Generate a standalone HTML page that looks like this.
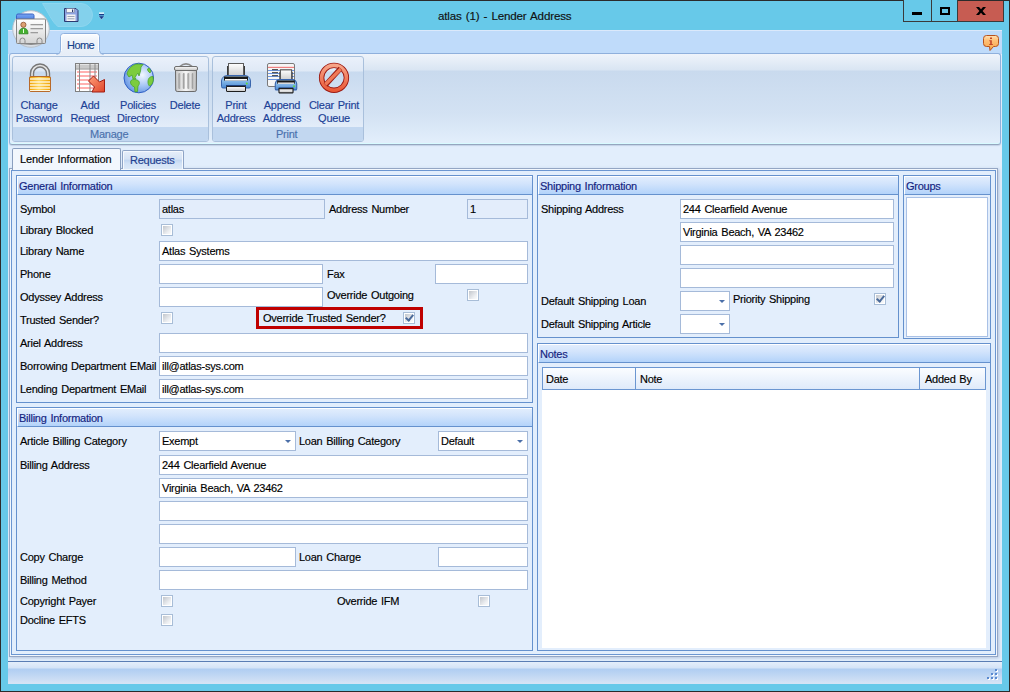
<!DOCTYPE html>
<html><head><meta charset="utf-8">
<style>
*{box-sizing:border-box}
html,body{margin:0;padding:0}
body{width:1010px;height:692px;position:relative;overflow:hidden;background:#67c9e9;font-family:"Liberation Sans",sans-serif;font-size:11px;color:#000;letter-spacing:-0.25px;word-spacing:1px;-webkit-text-stroke:0.15px currentColor}
.a{position:absolute}
.t{position:absolute;white-space:nowrap;line-height:13px}
.grp{position:absolute;border:1px solid #6591cd;background:#e3eefc}
.gh{position:absolute;left:0;top:0;right:0;height:19px;border-top:1px solid #fff;border-left:1px solid #fff;border-bottom:1px solid #6591cd;background:linear-gradient(#e1edfd,#d2e4fc 40%,#b3d3fa);color:#13237f}
.gh span{position:absolute;left:1px;top:3px;line-height:13px}
.tb{position:absolute;height:20px;border:1px solid #a5bad9;background:#fff}
.tb span{position:absolute;left:2px;top:3px;line-height:13px;white-space:nowrap}
.dis{background:#e3edfb}
.cb{position:absolute;width:12px;height:12px;border:1px solid #a8bdd7;background:#fff}
.cb:after{content:"";position:absolute;left:1px;top:1px;width:8px;height:8px;background:linear-gradient(135deg,#c2c6cc,#eef0f3 70%,#fafbfc)}
.chk:before{content:"";position:absolute;z-index:2;left:2px;top:0px;width:3px;height:6px;border-right:2px solid #4a6a9a;border-bottom:2px solid #4a6a9a;transform:rotate(40deg);left:3px}
.cmb:after{content:"";position:absolute;right:4px;top:8px;border-left:3px solid transparent;border-right:3px solid transparent;border-top:3px solid #4b6fa8}
.rb{position:absolute;color:#1c4196;text-align:center;line-height:13px;white-space:nowrap}
</style></head>
<body>
<!-- window frame -->
<div class="a" style="left:0;top:0;width:1010px;height:692px;border:1px solid #2b2b2b"></div>

<!-- title -->
<div class="t" style="left:438px;top:9px;font-size:11.6px;color:#111;letter-spacing:-0.15px">atlas (1) - Lender Address</div>

<!-- window buttons -->
<div class="a" style="left:903px;top:0;width:29px;height:22px;border:1px solid #3a3a3a;border-top:0;background:#67c9e9"></div>
<div class="a" style="left:912px;top:12px;width:10px;height:3px;background:#000"></div>
<div class="a" style="left:932px;top:0;width:26px;height:22px;border-right:1px solid #3a3a3a;border-bottom:1px solid #3a3a3a;background:#67c9e9"></div>
<div class="a" style="left:940px;top:7px;width:10px;height:8px;border:2px solid #000"></div>
<div class="a" style="left:957px;top:1px;width:47px;height:21px;background:#c75c52;border-left:1px solid #3a3a3a;border-right:1px solid #3a3a3a;border-bottom:1px solid #3a3a3a"></div>
<svg class="a" style="left:970px;top:2px" width="22" height="18" viewBox="0 0 22 18"><path d="M6 5 H9 L11 7.3 L13 5 H16 L12.6 9 L16 13 H13 L11 10.7 L9 13 H6 L9.4 9 Z" fill="#000"/></svg>

<!-- ribbon tab strip -->
<div class="a" style="left:8px;top:30px;width:994px;height:632px;background:#e2eefc"></div>
<div class="a" style="left:8px;top:30px;width:994px;height:24px;background:#bfdbfa;border-top:1px solid #dbe9fb"></div>
<!-- QAT background -->
<svg class="a" style="left:0;top:0" width="110" height="54" viewBox="0 0 110 54">
<defs>
<radialGradient id="apc" cx="0.5" cy="0.35" r="0.65"><stop offset="0" stop-color="#ffffff"/><stop offset="0.7" stop-color="#f3f5f8"/><stop offset="1" stop-color="#d2d8df"/></radialGradient>
<linearGradient id="crd" x1="0" x2="0" y1="0" y2="1"><stop offset="0" stop-color="#ffffff"/><stop offset="1" stop-color="#d4d4d4"/></linearGradient>
<linearGradient id="ctab" x1="0" x2="0" y1="0" y2="1"><stop offset="0" stop-color="#7aa6f0"/><stop offset="1" stop-color="#4f83e6"/></linearGradient>
</defs>
<path d="M42.5 3.5 H81 A11.5 11.5 0 0 1 81 26.5 H58 C52 22 48 12 42.5 3.5 Z" fill="#83d1ec" stroke="#8dd6ef" stroke-width="1"/>
<circle cx="31" cy="29" r="18.3" fill="url(#apc)" stroke="#b9c2cc" stroke-width="1"/>
<path d="M16.5 19 V15.5 Q16.5 14 18 14 H32.5 Q34 14 34 15.5 V19 Z" fill="url(#ctab)" stroke="#3b62c4" stroke-width="1"/>
<rect x="16.5" y="19" width="29" height="24.5" rx="1" fill="url(#crd)" stroke="#858585" stroke-width="1"/>
<circle cx="23.4" cy="24.8" r="2.6" fill="#dca174" stroke="#8d4f2c" stroke-width="0.8"/>
<path d="M19 33.8 Q19 28.2 23.5 28.2 Q28 28.2 28 33.8 Z" fill="#44b02f" stroke="#2b7f1d" stroke-width="0.8"/>
<rect x="23" y="29" width="1" height="4" fill="#e8ffe0"/>
<g fill="#9c9c9c"><rect x="30.5" y="24" width="12.5" height="1.3"/><rect x="30.5" y="28" width="12.5" height="1.3"/><rect x="30.5" y="32" width="7.5" height="1.3"/></g>
<path d="M20 43.5 V40.5 A2.5 2.5 0 0 1 25 40.5 V43.5 M37 43.5 V40.5 A2.5 2.5 0 0 1 42 40.5 V43.5 M20 43.5 Q31 45.5 42 43.5" fill="none" stroke="#8a8a8a" stroke-width="1"/>
<path d="M64.5 8.5 H76 L78 10.5 V21.5 H64.5 Z" fill="#8ea3e2" stroke="#2c3a70" stroke-width="1"/>
<rect x="66.5" y="8.5" width="8" height="4" fill="#f4f4f4" stroke="#5a6690" stroke-width="0.5"/>
<rect x="72" y="9.5" width="1.2" height="2.5" fill="#2c3a70"/>
<rect x="66.5" y="14.5" width="9" height="6.5" fill="#f4f4f4"/>
<g fill="#9aa3b8"><rect x="67.5" y="16" width="7" height="1"/><rect x="67.5" y="18.3" width="7" height="1"/></g>
<rect x="99" y="12.5" width="5" height="1.2" fill="#ffffff"/>
<rect x="99" y="14" width="5" height="1.3" fill="#1b3a8a"/>
<path d="M98.8 16.2 H104.2 L101.5 19.5 Z" fill="#1b3a8a"/>
<path d="M98.8 16.2 L101.5 19.5 L104.2 16.2" fill="none" stroke="#ffffff" stroke-width="0.5" opacity="0.6"/>
</svg>
<!-- Home tab -->

<!-- info icon -->
<svg class="a" style="left:980px;top:32px" width="22" height="20" viewBox="0 0 22 20">
<defs><linearGradient id="ifo" x1="0" x2="0" y1="0" y2="1"><stop offset="0" stop-color="#ffe3b8"/><stop offset="0.3" stop-color="#ffc27a"/><stop offset="1" stop-color="#f7a444"/></linearGradient></defs>
<path d="M6.5 3.5 H15.5 Q18.5 3.5 18.5 6.5 V11.5 Q18.5 14.5 15.5 14.5 H13.5 L10 18.5 L9.5 14.5 H6.5 Q3.5 14.5 3.5 11.5 V6.5 Q3.5 3.5 6.5 3.5 Z" fill="url(#ifo)" stroke="#b8521c" stroke-width="1"/>
<rect x="10" y="5.5" width="2" height="1.5" fill="#c4452a"/>
<path d="M9.3 8.3 H11.8 V12 H12.8 V13 H9.2 V12 H10.2 V9.3 H9.3 Z" fill="#c4452a"/>
</svg>
<!-- ribbon panel -->
<div class="a" style="left:9px;top:53px;width:992px;height:92px;border:1px solid #8fb0dc;border-bottom-color:#95a6bf;border-radius:3px;background:linear-gradient(#eff4fb 0px,#d9e5f3 16px,#c9daee 17px,#d3e2f3 60px,#e2eefb 88px);box-shadow:inset 0 -1px 0 #d8fbff, 0 1px 1px rgba(150,170,200,0.4)"></div>
<svg class="a" style="left:55px;top:30px" width="50" height="26" viewBox="0 0 50 26">
<defs><linearGradient id="hmt" x1="0" x2="0" y1="0" y2="1"><stop offset="0" stop-color="#fbfdff"/><stop offset="0.35" stop-color="#eef3fa"/><stop offset="1" stop-color="#e6edf7"/></linearGradient></defs>
<path d="M1.5 24.5 Q5.5 24 5.5 20.5 V6.5 Q5.5 3.5 8.5 3.5 H41.5 Q44.5 3.5 44.5 6.5 V20.5 Q44.5 24 48.5 24.5 V25.5 H1.5 Z" fill="url(#hmt)"/>
<path d="M1.5 24.5 Q5.5 24 5.5 20.5 V6.5 Q5.5 3.5 8.5 3.5 H41.5 Q44.5 3.5 44.5 6.5 V20.5 Q44.5 24 48.5 24.5" fill="none" stroke="#8fb1de" stroke-width="1"/>
<path d="M6.5 21 V7 Q6.5 4.5 9 4.5 H41 Q43.5 4.5 43.5 7 V21" fill="none" stroke="#ffffff" stroke-width="1" opacity="0.8"/>
</svg>
<div class="t" style="left:67px;top:39px;color:#15428b;letter-spacing:-0.55px">Home</div>
<!-- Manage group -->
<div class="a" style="left:12px;top:56px;width:197px;height:86px;border:1px solid #a9c0dc;border-radius:3px;background:linear-gradient(#eaf1fb 0px,#dfe9f6 14px,#c8daef 15px,#dce8f7 60px,#e3edf9 70px)"></div>
<div class="a" style="left:13px;top:127px;width:195px;height:14px;background:#c2d7f0;border-radius:0 0 2px 2px"></div>
<div class="t" style="left:90px;top:128px;color:#4a71ad">Manage</div>
<!-- Print group -->
<div class="a" style="left:212px;top:56px;width:152px;height:86px;border:1px solid #a9c0dc;border-radius:3px;background:linear-gradient(#eaf1fb 0px,#dfe9f6 14px,#c8daef 15px,#dce8f7 60px,#e3edf9 70px)"></div>
<div class="a" style="left:213px;top:127px;width:150px;height:14px;background:#c2d7f0;border-radius:0 0 2px 2px"></div>
<div class="t" style="left:276px;top:128px;color:#4a71ad">Print</div>

<!-- ribbon buttons text -->
<div class="rb" style="left:12px;top:99px;width:54px">Change<br>Password</div>
<div class="rb" style="left:64px;top:99px;width:52px">Add<br>Request</div>
<div class="rb" style="left:112px;top:99px;width:52px">Policies<br>Directory</div>
<div class="rb" style="left:160px;top:99px;width:50px">Delete</div>
<div class="rb" style="left:210px;top:99px;width:52px">Print<br>Address</div>
<div class="rb" style="left:256px;top:99px;width:52px">Append<br>Address</div>
<div class="rb" style="left:304px;top:99px;width:60px">Clear Print<br>Queue</div>

<!-- ICONS placeholder -->
<div id="icons">
<svg class="a" style="left:20px;top:58px" width="40" height="40" viewBox="0 0 40 40">
<defs>
<linearGradient id="shk" x1="0" x2="1" y1="0" y2="0"><stop offset="0" stop-color="#6e6e6e"/><stop offset="0.5" stop-color="#f0f0f0"/><stop offset="1" stop-color="#6e6e6e"/></linearGradient>
<linearGradient id="gold" x1="0" x2="1"><stop offset="0" stop-color="#f0a000"/><stop offset="0.45" stop-color="#ffd860"/><stop offset="1" stop-color="#eea000"/></linearGradient>
</defs>
<path d="M12 19 V15.5 A8 8 0 0 1 28 15.5 V19" fill="none" stroke="#777" stroke-width="4.4"/>
<path d="M12 19 V15.5 A8 8 0 0 1 28 15.5 V19" fill="none" stroke="#e6e6e6" stroke-width="1.6"/>
<rect x="9.5" y="18.5" width="21" height="15" rx="1.5" fill="url(#gold)" stroke="#b86a2a" stroke-width="1"/>
<g fill="#fffbe8" opacity="0.95"><rect x="10" y="20.3" width="20" height="1.4"/><rect x="10" y="23.3" width="20" height="1.4"/><rect x="10" y="26.3" width="20" height="1.4"/><rect x="10" y="29.3" width="20" height="1.4"/><rect x="10" y="32" width="20" height="1"/></g>
</svg>
<svg class="a" style="left:70px;top:58px" width="40" height="40" viewBox="0 0 40 40">
<defs><linearGradient id="arr" x1="0" y1="0" x2="1" y2="1"><stop offset="0" stop-color="#ffa07a"/><stop offset="1" stop-color="#e0452a"/></linearGradient></defs>
<rect x="5.5" y="5.5" width="23" height="28" fill="#fff" stroke="#7f7f7f"/>
<rect x="6" y="6.5" width="22" height="4" fill="#c9c9c9"/>
<g fill="#ffb0b0"><rect x="7" y="13" width="20" height="2"/><rect x="7" y="17" width="20" height="2"/><rect x="7" y="21" width="20" height="2"/><rect x="7" y="25" width="20" height="2"/><rect x="7" y="29" width="20" height="2"/></g>
<g fill="#8a8a8a"><rect x="9" y="6" width="1" height="27"/><rect x="19.5" y="6" width="1" height="27"/><rect x="24.5" y="6" width="1" height="27"/><rect x="6" y="10.5" width="22" height="1"/></g>
<path d="M23.5 18 L29.5 24 L34.5 21.5 L34.5 34 L22 34 L24.5 29 L18.5 23 Z" fill="url(#arr)" stroke="#a21d12" stroke-width="1" stroke-linejoin="round"/>
</svg>
<svg class="a" style="left:118px;top:58px" width="40" height="40" viewBox="0 0 40 40">
<defs><radialGradient id="glb" cx="0.62" cy="0.4" r="0.7"><stop offset="0" stop-color="#f2f7ff"/><stop offset="0.5" stop-color="#a9c8f5"/><stop offset="1" stop-color="#5d8fe0"/></radialGradient></defs>
<circle cx="20.8" cy="20" r="14.8" fill="url(#glb)" stroke="#2f5fc4" stroke-width="1"/>
<path d="M9 16 C10 11 14 7 19 6 L25 6.5 L23 9 L22.5 13 L21 18 L20 15 L18.5 17 L17 19.5 L18 21 L15 21 L14 17 L11 19 Z" fill="#7ccc3e" stroke="#4aa52a" stroke-width="0.8"/>
<path d="M12.5 24 C13 21 16 21 19 22 C22 23 22 26 20 28 L19.5 33.5 L17 34 L16.5 29 C14 28 12.5 26.5 12.5 24 Z" fill="#7ccc3e" stroke="#4aa52a" stroke-width="0.8"/>
<path d="M30 24 C30 20 32 18.5 35 18.5 L35.3 22 C35 25 33.5 27 31.5 28 C30.5 27 30 26 30 24 Z" fill="#7ccc3e" stroke="#4aa52a" stroke-width="0.8"/>
<path d="M29.5 11 L31 10 L33 13 L32 15 L30 13 Z" fill="#7ccc3e" stroke="#4aa52a" stroke-width="0.8"/>
</svg>
<svg class="a" style="left:166px;top:58px" width="40" height="40" viewBox="0 0 40 40">
<defs><linearGradient id="trs" x1="0" x2="1"><stop offset="0" stop-color="#c8c8c8"/><stop offset="0.5" stop-color="#f6f6f6"/><stop offset="1" stop-color="#c0c0c0"/></linearGradient>
<linearGradient id="lid" x1="0" x2="0" y1="0" y2="1"><stop offset="0" stop-color="#fafafa"/><stop offset="1" stop-color="#c4c4c4"/></linearGradient>
<linearGradient id="grv" x1="0" x2="1"><stop offset="0" stop-color="#8c8c8c"/><stop offset="1" stop-color="#d0d0d0"/></linearGradient></defs>
<path d="M13.8 8.5 Q20 3.2 26.2 8.5" fill="none" stroke="#8a8a8a" stroke-width="1.6"/>
<path d="M9.5 12.5 H30.5 L30.3 32 Q30.2 33.5 28.8 33.5 H11.2 Q9.8 33.5 9.7 32 Z" fill="url(#trs)" stroke="#6a6a6a" stroke-width="1"/>
<g fill="url(#grv)"><rect x="12.5" y="15" width="2.2" height="16" rx="1"/><rect x="16.8" y="15" width="2.2" height="16" rx="1"/><rect x="21.5" y="15" width="2.2" height="16" rx="1"/><rect x="25.8" y="15" width="2.2" height="16" rx="1"/></g>
<rect x="8.5" y="8.5" width="23" height="4" rx="1.5" fill="url(#lid)" stroke="#6e6e6e" stroke-width="1"/>
</svg>
<svg class="a" style="left:216px;top:58px" width="40" height="40" viewBox="0 0 40 40" id="prn">
<defs><linearGradient id="pap" x1="0" x2="0" y1="0" y2="1"><stop offset="0" stop-color="#fff"/><stop offset="1" stop-color="#c8c8c8"/></linearGradient>
<linearGradient id="pbl" x1="0" x2="0" y1="0" y2="1"><stop offset="0" stop-color="#b5dbf7"/><stop offset="1" stop-color="#4b8bd4"/></linearGradient></defs>
<rect x="11" y="8" width="18" height="12" fill="#3a3a3a"/>
<rect x="12.5" y="5.5" width="15" height="14" fill="url(#pap)" stroke="#5c5c5c" stroke-width="1"/>
<path d="M5.5 23 Q6 18 11 17.5 H29 Q34 18 34.5 23 V28.5 Q34.5 30 33 30 H7 Q5.5 30 5.5 28.5 Z" fill="url(#pbl)" stroke="#3a66ad" stroke-width="1"/>
<rect x="8" y="18.5" width="24" height="4" fill="#1a1a1a"/>
<rect x="9" y="21" width="22" height="1.6" fill="#fafafa"/>
<rect x="10" y="27" width="20" height="2" fill="#1f3f7a"/>
<rect x="10.5" y="28.5" width="19" height="5" rx="0.5" fill="url(#pap)" stroke="#1e1e1e" stroke-width="1"/>
<circle cx="30.8" cy="25.5" r="1" fill="#5fdc3a"/>
</svg>
<svg class="a" style="left:262px;top:58px" width="40" height="40" viewBox="0 0 40 40">
<rect x="5.5" y="5.5" width="27" height="23" rx="1.5" fill="#f6f6f6" stroke="#7a7a7a" stroke-width="1"/>
<rect x="6" y="8.8" width="26" height="1.2" fill="#f08080"/>
<g fill="#6a95e0"><rect x="6" y="12" width="26" height="1"/><rect x="6" y="15" width="26" height="1"/><rect x="6" y="18" width="26" height="1"/><rect x="6" y="21" width="26" height="1"/></g>
<g fill="#555"><rect x="10" y="11" width="6" height="1.2"/><rect x="10" y="14" width="6" height="1.2"/><rect x="10" y="17" width="6" height="1.2"/></g>
<g transform="translate(9.2,7.3) scale(0.74,0.82)">
<rect x="11" y="8" width="18" height="12" fill="#3a3a3a"/>
<rect x="12.5" y="5.5" width="15" height="14" fill="url(#pap)" stroke="#5c5c5c" stroke-width="1.5"/>
<path d="M5.5 23 Q6 18 11 17.5 H29 Q34 18 34.5 23 V28.5 Q34.5 30 33 30 H7 Q5.5 30 5.5 28.5 Z" fill="url(#pbl)" stroke="#3a66ad" stroke-width="1.5"/>
<rect x="8" y="18.5" width="24" height="4" fill="#1a1a1a"/>
<rect x="9" y="21" width="22" height="1.6" fill="#fafafa"/>
<rect x="10" y="27" width="20" height="2" fill="#1f3f7a"/>
<rect x="10.5" y="28.5" width="19" height="5" rx="0.5" fill="url(#pap)" stroke="#1e1e1e" stroke-width="1.5"/>
<circle cx="30.8" cy="25.5" r="1.3" fill="#5fdc3a"/>
</g>
</svg>
<svg class="a" style="left:314px;top:58px" width="40" height="40" viewBox="0 0 40 40">
<defs><linearGradient id="red" x1="0" x2="0" y1="0" y2="1"><stop offset="0" stop-color="#f7a488"/><stop offset="1" stop-color="#ea5a38"/></linearGradient></defs>
<circle cx="20" cy="19.8" r="12.4" fill="none" stroke="#9c1a12" stroke-width="5.4"/>
<circle cx="20" cy="19.8" r="12.4" fill="none" stroke="url(#red)" stroke-width="3.6"/>
<path d="M26.5 10.5 L11.5 27" stroke="#9c1a12" stroke-width="5"/>
<path d="M26.7 11 L11.3 26.5" stroke="#f07a58" stroke-width="3.2"/>
</svg>
</div>

<!-- tab control -->
<div class="a" style="left:9px;top:168px;width:989px;height:489px;border:1px solid #94a6c4;background:#f2f7fd;box-shadow:1px 1px 3px rgba(120,145,185,0.45)"></div>
<div class="a" style="left:11px;top:170px;width:985px;height:485px;border:1px solid #6b96d1;background:#e2eefc"></div>
<div class="a" style="left:12px;top:148px;width:109px;height:22px;border:1px solid #8a9fbf;border-bottom:0;border-radius:2px 2px 0 0;background:#f2f7fd"></div>
<div class="t" style="left:20px;top:153px;color:#000;letter-spacing:-0.1px">Lender Information</div>
<div class="a" style="left:122px;top:150px;width:62px;height:19px;border:1px solid #8ea4c6;border-bottom:0;border-radius:2px 2px 0 0;box-shadow:inset 1px 1px 0 #f4f8fd,inset -1px 0 0 #f4f8fd;background:linear-gradient(#e6eefa 0%,#d5e3f5 45%,#c3d7f2 52%,#d2e2f6 70%,#dce9f8 100%)"></div>
<div class="t" style="left:130px;top:154px;color:#1f3f8f">Requests</div>

<div id="content">
<div class="grp" style="left:16px;top:175px;width:517px;height:228px"><div class="gh"><span>General Information</span></div></div>
<div class="t" style="left:20px;top:203px;">Symbol</div>
<div class="tb dis" style="left:159px;top:199px;width:166px;height:20px"><span>atlas</span></div>
<div class="t" style="left:329px;top:203px;">Address Number</div>
<div class="tb dis" style="left:467px;top:199px;width:61px;height:20px"><span>1</span></div>
<div class="t" style="left:20px;top:224px;">Library Blocked</div>
<div class="cb" style="left:161px;top:224px"></div>
<div class="t" style="left:20px;top:245px;">Library Name</div>
<div class="tb " style="left:159px;top:241px;width:369px;height:20px"><span>Atlas Systems</span></div>
<div class="t" style="left:20px;top:268px;">Phone</div>
<div class="tb " style="left:159px;top:264px;width:164px;height:20px"></div>
<div class="t" style="left:327px;top:268px;">Fax</div>
<div class="tb " style="left:435px;top:264px;width:93px;height:20px"></div>
<div class="t" style="left:20px;top:291px;">Odyssey Address</div>
<div class="tb " style="left:159px;top:287px;width:164px;height:20px"></div>
<div class="t" style="left:327px;top:289px;">Override Outgoing</div>
<div class="cb" style="left:467px;top:289px"></div>
<div class="t" style="left:20px;top:314px;">Trusted Sender?</div>
<div class="cb" style="left:161px;top:312px"></div>
<div class="a" style="left:256px;top:307px;width:167px;height:22px;border:3px solid #bf0000"></div>
<div class="t" style="left:263px;top:312px;">Override Trusted Sender?</div>
<div class="cb chk" style="left:403px;top:312px"></div>
<div class="t" style="left:20px;top:337px;">Ariel Address</div>
<div class="tb " style="left:159px;top:333px;width:369px;height:20px"></div>
<div class="t" style="left:20px;top:360px;">Borrowing Department EMail</div>
<div class="tb " style="left:159px;top:356px;width:369px;height:20px"><span>ill@atlas-sys.com</span></div>
<div class="t" style="left:20px;top:383px;">Lending Department EMail</div>
<div class="tb " style="left:159px;top:379px;width:369px;height:20px"><span>ill@atlas-sys.com</span></div>
<div class="grp" style="left:16px;top:407px;width:517px;height:244px"><div class="gh"><span>Billing Information</span></div></div>
<div class="t" style="left:20px;top:435px;">Article Billing Category</div>
<div class="tb cmb" style="left:159px;top:431px;width:137px;height:20px"><span>Exempt</span></div>
<div class="t" style="left:299px;top:435px;">Loan Billing Category</div>
<div class="tb cmb" style="left:438px;top:431px;width:90px;height:20px"><span>Default</span></div>
<div class="t" style="left:20px;top:459px;">Billing Address</div>
<div class="tb " style="left:159px;top:455px;width:369px;height:20px"><span>244 Clearfield Avenue</span></div>
<div class="tb " style="left:159px;top:478px;width:369px;height:20px"><span>Virginia Beach, VA 23462</span></div>
<div class="tb " style="left:159px;top:501px;width:369px;height:20px"></div>
<div class="tb " style="left:159px;top:524px;width:369px;height:20px"></div>
<div class="t" style="left:20px;top:551px;">Copy Charge</div>
<div class="tb " style="left:159px;top:547px;width:137px;height:20px"></div>
<div class="t" style="left:299px;top:551px;">Loan Charge</div>
<div class="tb " style="left:438px;top:547px;width:90px;height:20px"></div>
<div class="t" style="left:20px;top:574px;">Billing Method</div>
<div class="tb " style="left:159px;top:570px;width:369px;height:20px"></div>
<div class="t" style="left:20px;top:595px;">Copyright Payer</div>
<div class="cb" style="left:161px;top:595px"></div>
<div class="t" style="left:337px;top:595px;">Override IFM</div>
<div class="cb" style="left:478px;top:595px"></div>
<div class="t" style="left:20px;top:614px;">Docline EFTS</div>
<div class="cb" style="left:161px;top:614px"></div>
<div class="grp" style="left:537px;top:175px;width:362px;height:163px"><div class="gh"><span>Shipping Information</span></div></div>
<div class="t" style="left:541px;top:203px;">Shipping Address</div>
<div class="tb " style="left:680px;top:199px;width:214px;height:20px"><span>244 Clearfield Avenue</span></div>
<div class="tb " style="left:680px;top:222px;width:214px;height:20px"><span>Virginia Beach, VA 23462</span></div>
<div class="tb " style="left:680px;top:245px;width:214px;height:20px"></div>
<div class="tb " style="left:680px;top:268px;width:214px;height:20px"></div>
<div class="t" style="left:541px;top:295px;">Default Shipping Loan</div>
<div class="tb cmb" style="left:680px;top:291px;width:50px;height:20px"></div>
<div class="t" style="left:733px;top:293px;">Priority Shipping</div>
<div class="cb chk" style="left:874px;top:293px"></div>
<div class="t" style="left:541px;top:318px;">Default Shipping Article</div>
<div class="tb cmb" style="left:680px;top:314px;width:50px;height:20px"></div>
<div class="grp" style="left:903px;top:175px;width:88px;height:164px"><div class="gh"><span>Groups</span></div></div>
<div class="a" style="left:906px;top:197px;width:82px;height:140px;border:1px solid #a9c1e6;background:#fff"></div>
<div class="grp" style="left:537px;top:343px;width:454px;height:308px"><div class="gh"><span>Notes</span></div></div>
<div class="a" style="left:542px;top:367px;width:444px;height:281px;background:#fff"></div>
<div class="a" style="left:542px;top:367px;width:444px;height:23px;border:1px solid #6b96d1;background:linear-gradient(#fbfdff,#dfeafa)"></div>
<div class="a" style="left:635px;top:368px;width:1px;height:22px;background:#6b96d1"></div>
<div class="a" style="left:919px;top:368px;width:1px;height:22px;background:#6b96d1"></div>
<div class="t" style="left:546px;top:373px;">Date</div>
<div class="t" style="left:640px;top:373px;">Note</div>
<div class="t" style="left:925px;top:373px;">Added By</div>
</div>

<!-- status bar -->
<div class="a" style="left:8px;top:661px;width:994px;height:23px;border-top:1px solid #5a7db4;background:linear-gradient(#e4eefb 0px,#d4e3f7 6px,#b0cdf2 7px,#bfd6f3 13px,#d5e3f5 21px)"></div>
<svg class="a" style="left:985px;top:667px" width="14" height="14"><rect x="11" y="3" width="2" height="2" fill="#fff"/><rect x="10" y="2" width="2" height="2" fill="#5a8ad0"/><rect x="7" y="7" width="2" height="2" fill="#fff"/><rect x="6" y="6" width="2" height="2" fill="#5a8ad0"/><rect x="11" y="7" width="2" height="2" fill="#fff"/><rect x="10" y="6" width="2" height="2" fill="#5a8ad0"/><rect x="3" y="11" width="2" height="2" fill="#fff"/><rect x="2" y="10" width="2" height="2" fill="#5a8ad0"/><rect x="7" y="11" width="2" height="2" fill="#fff"/><rect x="6" y="10" width="2" height="2" fill="#5a8ad0"/><rect x="11" y="11" width="2" height="2" fill="#fff"/><rect x="10" y="10" width="2" height="2" fill="#5a8ad0"/></svg>
</body></html>
